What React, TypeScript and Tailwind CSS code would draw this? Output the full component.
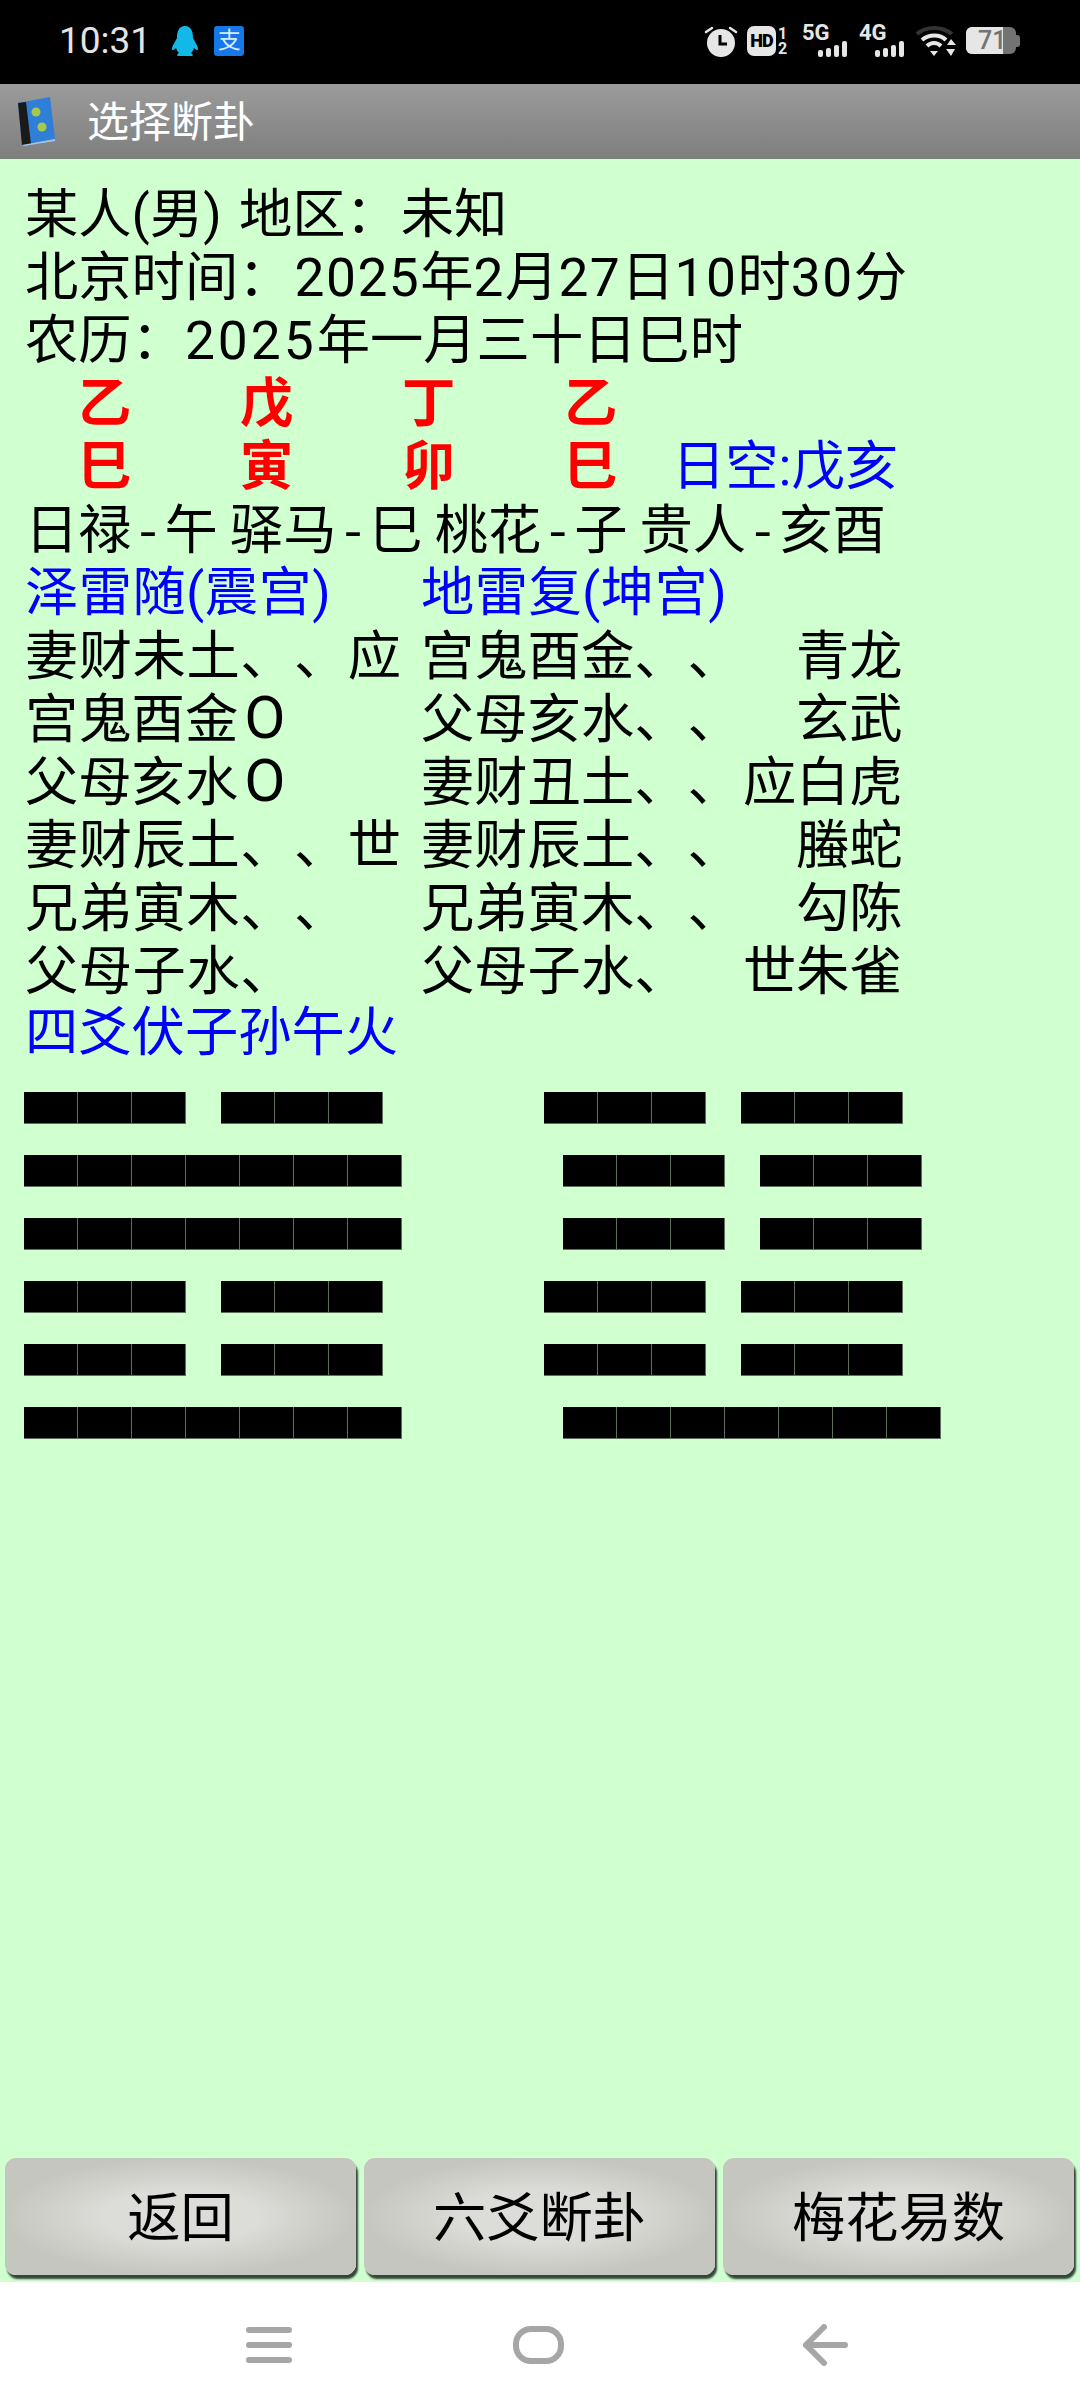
const font = "font-['Roboto','Noto_Sans_CJK_SC',sans-serif]";
const cjk = "font-['Noto_Sans_CJK_SC',sans-serif]";

const rows = [
  ["妻财未土、、应", "宫鬼酉金、、", "", "青龙"],
  ["宫鬼酉金O", "父母亥水、、", "", "玄武"],
  ["父母亥水O", "妻财丑土、、", "应", "白虎"],
  ["妻财辰土、、世", "妻财辰土、、", "", "螣蛇"],
  ["兄弟寅木、、", "兄弟寅木、、", "", "勾陈"],
  ["父母子水、", "父母子水、", "世", "朱雀"],
];

// left hexagram, right hexagram, right indent
const bars: [boolean, boolean, boolean][] = [
  [false, false, false],
  [true, false, true],
  [true, false, true],
  [false, false, false],
  [false, false, false],
  [true, true, true],
];

function Cells({ n }: { n: number }) {
  return (
    <div className="flex h-[32px]">
      {Array.from({ length: n }).map((_, i) => (
        <div key={i} className="w-[54px] h-full bg-black border-r border-b border-[#5f6f5f]" />
      ))}
    </div>
  );
}

function Yao({ yang }: { yang: boolean }) {
  if (yang) return <Cells n={7} />;
  return (
    <div className="flex gap-[35px]">
      <Cells n={3} />
      <Cells n={3} />
    </div>
  );
}

function Dash() {
  return <span className="inline-block w-[33px] text-center">-</span>;
}

function Num({ children, wide }: { children: string; wide?: boolean }) {
  return <span className={wide ? "tracking-[3px]" : "tracking-[1.5px]"}>{children}</span>;
}

function LeftCell({ text }: { text: string }) {
  if (text.endsWith("O")) {
    return (
      <span className="w-[396px]">
        {text.slice(0, -1)}
        <span className="ml-[6px] font-['Roboto'] text-[60px] leading-[53px]">O</span>
      </span>
    );
  }
  return <span className="w-[396px] tracking-[0.5px]">{text}</span>;
}

function StatusIcons() {
  return (
    <div className="flex items-center ml-auto mr-[60px] h-[32px] mt-[-3px] text-[#e6e6e6]">
      <svg width="34" height="32" viewBox="0 0 34 32">
        <circle cx="17" cy="18" r="14" fill="#e6e6e6" />
        <path d="M16 10v9h7" stroke="#000" strokeWidth="3" fill="none" />
        <path d="M2 7l6-4M32 7l-6-4" stroke="#e6e6e6" strokeWidth="2.5" strokeLinecap="round" />
      </svg>
      <div className="ml-[9px] w-[29px] h-[30px] rounded-[7px] bg-[#e6e6e6] flex items-center justify-center text-black text-[18px] font-black font-['Roboto'] leading-none tracking-[-1px]">
        HD
      </div>
      <div className="flex flex-col text-[16px] font-bold leading-[15px] ml-[2px] font-['Roboto'] w-[12px]">
        <span>1</span>
        <span>2</span>
      </div>
      <Signal label="5G" className="ml-[12px]" />
      <Signal label="4G" className="ml-[12px]" />
      <svg width="42" height="32" viewBox="0 0 42 32" className="ml-[11px]">
        <path d="M2 9C11 1 27 1 37 9" stroke="#333" strokeWidth="4" fill="none" />
        <path d="M7 15C14 9 25 9 31 15" stroke="#e6e6e6" strokeWidth="4" fill="none" />
        <path d="M12 21C16 17 22 17 26 21" stroke="#e6e6e6" strokeWidth="4" fill="none" />
        <path d="M15 26h8l-4 5z" fill="#e6e6e6" />
        <path d="M36 14l5 6h-9zM36 31l-5-7h9z" fill="#e6e6e6" />
      </svg>
      <div className="ml-[9px] flex items-center">
        <div className="relative w-[50px] h-[27px] rounded-[6px] bg-[#737373] overflow-hidden">
          <div className="absolute left-0 top-0 h-full w-[37px] bg-[#e6e6e6]" />
          <span className="absolute left-[12px] top-[1px] text-[25px] leading-[25px] text-[#737373] font-medium font-['Roboto']">71</span>
        </div>
        <div className="w-[4px] h-[12px] rounded-r-[3px] bg-[#737373]" />
      </div>
    </div>
  );
}

function Signal({ label, className }: { label: string; className: string }) {
  return (
    <div className={`relative w-[45px] h-[32px] ${className}`}>
      <span className="absolute left-0 top-[-3px] text-[22px] leading-[22px] font-bold font-['Roboto']">{label}</span>
      <div className="absolute right-0 bottom-0 flex items-end gap-[3px]">
        <div className="w-[5px] h-[7px] rounded-[2px] bg-[#e6e6e6]" />
        <div className="w-[5px] h-[9px] rounded-[2px] bg-[#e6e6e6]" />
        <div className="w-[5px] h-[12px] rounded-[2px] bg-[#e6e6e6]" />
        <div className="w-[5px] h-[16px] rounded-[2px] bg-[#e6e6e6]" />
      </div>
    </div>
  );
}

function BottomButton({ label }: { label: string }) {
  return (
    <button className="w-[351px] h-[117px] rounded-[11px] text-[53.3px] text-black bg-[radial-gradient(ellipse_closest-side_at_center,#dcdcd8_45%,#c5c6bf_100%)] shadow-[2px_4px_2px_#34463a]">
      <span className="relative top-[3px]">{label}</span>
    </button>
  );
}

export default function App() {
  return (
    <div className={`w-[1080px] h-[2408px] flex flex-col bg-white ${font}`}>
      <div className="h-[84px] bg-black flex items-center pl-[59px] text-[#e4e4e4]">
        <span className="text-[37px] leading-none mt-[-3px]">10:31</span>
        <svg width="28" height="32" viewBox="0 0 28 32" className="ml-[20px] mt-[-3px]">
          <path d="M14 1C7 1 6 8 6 13c-2 4-5 8-5 11 0 2 2 1 4-1 1 3 2 4 3 5-2 1-3 3 0 3h12c3 0 2-2 0-3 1-1 2-2 3-5 2 2 4 3 4 1 0-3-3-7-5-11 0-5-1-12-8-12z" fill="#11b8e8" />
        </svg>
        <div className="ml-[15px] mt-[-3px] w-[30px] h-[30px] rounded-[3px] bg-[#1677e8] flex items-center justify-center text-[#d6ecff] text-[23px] leading-none">
          支
        </div>
        <StatusIcons />
      </div>

      <div className="h-[75px] flex items-center bg-gradient-to-b from-[#9b9b9b] to-[#7f7f7f] border-b border-[#768276]">
        <svg width="42" height="50" viewBox="0 0 42 50" className="ml-[17px]">
          <path d="M1 7L33 1l5 42L5 49z" fill="#2f7fd8" />
          <path d="M1 7l8-1 5 42-9 1z" fill="#1a1a1a" />
          <path d="M5 49l33-6 0 2-31 5z" fill="#9fc4e8" />
          <circle cx="19" cy="16" r="4.5" fill="#a8c84a" />
          <circle cx="25" cy="31" r="4.5" fill="#a8c84a" />
        </svg>
        <span className="ml-[28px] mt-[4px] text-[42px] leading-none text-white">选择断卦</span>
      </div>

      <div className="flex-1 bg-[#d0ffd0] flex flex-col">
        <div className="pt-[25px] pl-[25px] text-[53.3px] leading-[63px] text-black [text-spacing-trim:space-all]">
          <div className="h-[63px] whitespace-pre">
            某人(男) <span className="ml-[4px]">地区：</span>
            <span className="ml-[2px]">未知</span>
          </div>
          <div className="h-[63px]">
            北京时间：<span className="ml-[3px]"><Num>2025</Num></span>年<Num>2</Num>月<Num>27</Num>日<Num>10</Num>时<Num>30</Num>分
          </div>
          <div className="h-[63px]">
            农历：<Num wide>2025</Num>年一月三十日巳时
          </div>
          <div className="flex h-[63px] pl-[53px] font-bold text-[#ff0000]">
            <span className="w-[162px]">乙</span>
            <span className="w-[162px]">戊</span>
            <span className="w-[162px]">丁</span>
            <span>乙</span>
          </div>
          <div className="flex h-[63px] pl-[53px] font-bold text-[#ff0000]">
            <span className="w-[162px]">巳</span>
            <span className="w-[162px]">寅</span>
            <span className="w-[162px]">卯</span>
            <span className="w-[108px]">巳</span>
            <span className="font-normal text-[#0000ff]">日空:戊亥</span>
          </div>
          <div className={`h-[63px] leading-[53px] whitespace-pre ${cjk}`}>
            日禄<Dash />午 驿马<Dash />巳 桃花<Dash />子 贵人<Dash />亥酉
          </div>
          <div className="flex h-[63px] text-[#0000ff]">
            <span className="w-[396px] tracking-[0.4px]">泽雷随(震宫)</span>
            <span className="tracking-[0.4px]">地雷复(坤宫)</span>
          </div>
          {rows.map((r, i) => (
            <div key={i} className={`flex h-[63px] leading-[53px] whitespace-nowrap ${cjk}`}>
              <LeftCell text={r[0]} />
              <span className="w-[322px]">{r[1]}</span>
              <span className="w-[53px]">{r[2]}</span>
              <span>{r[3]}</span>
            </div>
          ))}
          <div className="h-[63px] leading-[60px] text-[#0000ff]">四爻伏子孙午火</div>
        </div>

        <div className="mt-[26px] pl-[24px] flex flex-col gap-[31px]">
          {bars.map((b, i) => (
            <div key={i} className="flex">
              <div className="w-[520px]">
                <Yao yang={b[0]} />
              </div>
              <div className={b[2] ? "ml-[19px]" : ""}>
                <Yao yang={b[1]} />
              </div>
            </div>
          ))}
        </div>

        <div className="mt-auto pl-[5px] pb-[7px] flex gap-[8px]">
          <BottomButton label="返回" />
          <BottomButton label="六爻断卦" />
          <BottomButton label="梅花易数" />
        </div>
      </div>

      <div className="h-[126px] bg-white flex items-start pt-[44px]">
        <svg width="46" height="38" viewBox="0 0 46 38" className="ml-[246px]">
          <path d="M3 4h40M3 19h40M3 34h40" stroke="#a6a6a6" strokeWidth="6" strokeLinecap="round" />
        </svg>
        <div className="ml-[221px] w-[51px] h-[38px] rounded-[18px] border-[6px] border-[#a6a6a6]" />
        <svg width="46" height="42" viewBox="0 0 46 42" className="ml-[238px] mt-[-2px]">
          <path d="M43 21H4M22 3L4 21l18 18" stroke="#a6a6a6" strokeWidth="6" strokeLinecap="round" strokeLinejoin="round" fill="none" />
        </svg>
      </div>
    </div>
  );
}
